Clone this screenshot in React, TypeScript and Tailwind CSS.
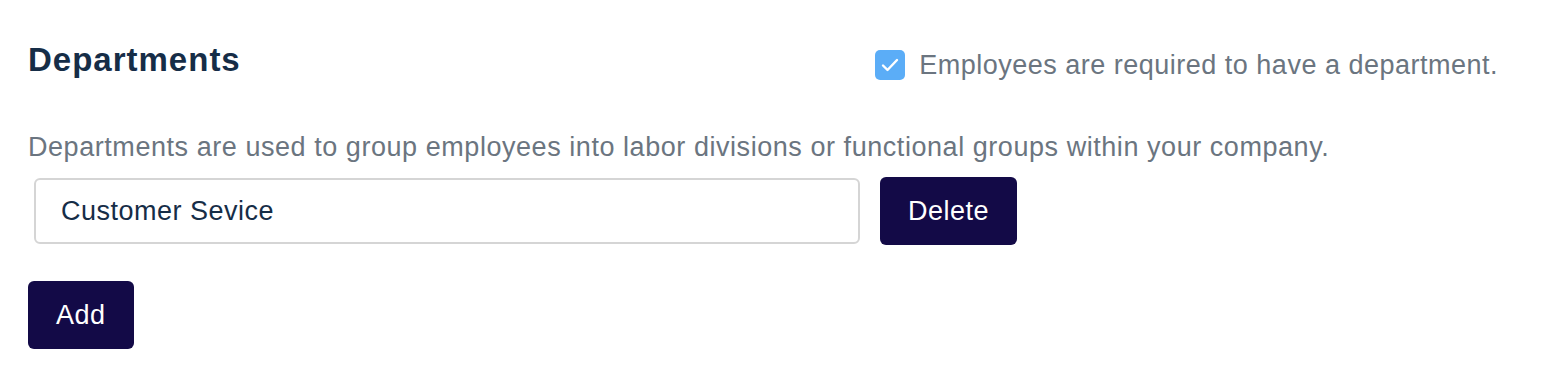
import { useState } from "react"

export default function App() {
  const [required, setRequired] = useState(true)
  const [departments, setDepartments] = useState<string[]>(["Customer Sevice"])

  return (
    <div className="min-h-screen bg-white font-['Liberation_Sans',Arial,sans-serif]">
      <div className="pl-[28px] pr-[66px] pt-[40px]">
        <div className="flex items-start justify-between">
          <h2 className="text-[33px] leading-[40px] font-bold tracking-[1px] text-[#162d47]">Departments</h2>
          <label className="mt-[10px] flex items-center gap-[14px] text-[27px] leading-[30px] tracking-[0.5px] text-[#6b7580]">
            <button
              onClick={() => setRequired(!required)}
              className={`flex h-[30px] w-[30px] items-center justify-center rounded-[5px] ${required ? "bg-[#5badf7]" : "border border-gray-300 bg-white"}`}
            >
              {required && (
                <svg viewBox="0 0 24 24" className="h-[24px] w-[24px]" fill="none" stroke="white" strokeWidth={2.4} strokeLinecap="round" strokeLinejoin="round">
                  <path d="M5 12.5l4.5 4.5L19 7" />
                </svg>
              )}
            </button>
            Employees are required to have a department.
          </label>
        </div>

        <p className="mt-[51px] text-[27px] leading-[32px] tracking-[0.55px] text-[#6b7580]">
          Departments are used to group employees into labor divisions or functional groups within your company.
        </p>

        <div className="mt-[14px] flex flex-col gap-[16px]">
          {departments.map((d, i) => (
            <div key={i} className="flex items-center gap-[20px] pl-[6px]">
              <input
                value={d}
                onChange={(e) => {
                  const next = [...departments]
                  next[i] = e.target.value
                  setDepartments(next)
                }}
                className="h-[66px] w-[826px] rounded-[6px] border-2 border-[#d5d5d5] px-[25px] text-[27px] tracking-[0.5px] text-[#162d47] outline-none"
              />
              <button
                onClick={() => setDepartments(departments.filter((_, j) => j !== i))}
                className="h-[68px] rounded-[6px] bg-[#130a47] px-[28px] text-[27px] tracking-[0.5px] text-white"
              >
                Delete
              </button>
            </div>
          ))}
        </div>

        <button
          onClick={() => setDepartments([...departments, ""])}
          className="mt-[36px] h-[68px] rounded-[6px] bg-[#130a47] px-[28px] text-[27px] tracking-[0.5px] text-white"
        >
          Add
        </button>
      </div>
    </div>
  )
}
